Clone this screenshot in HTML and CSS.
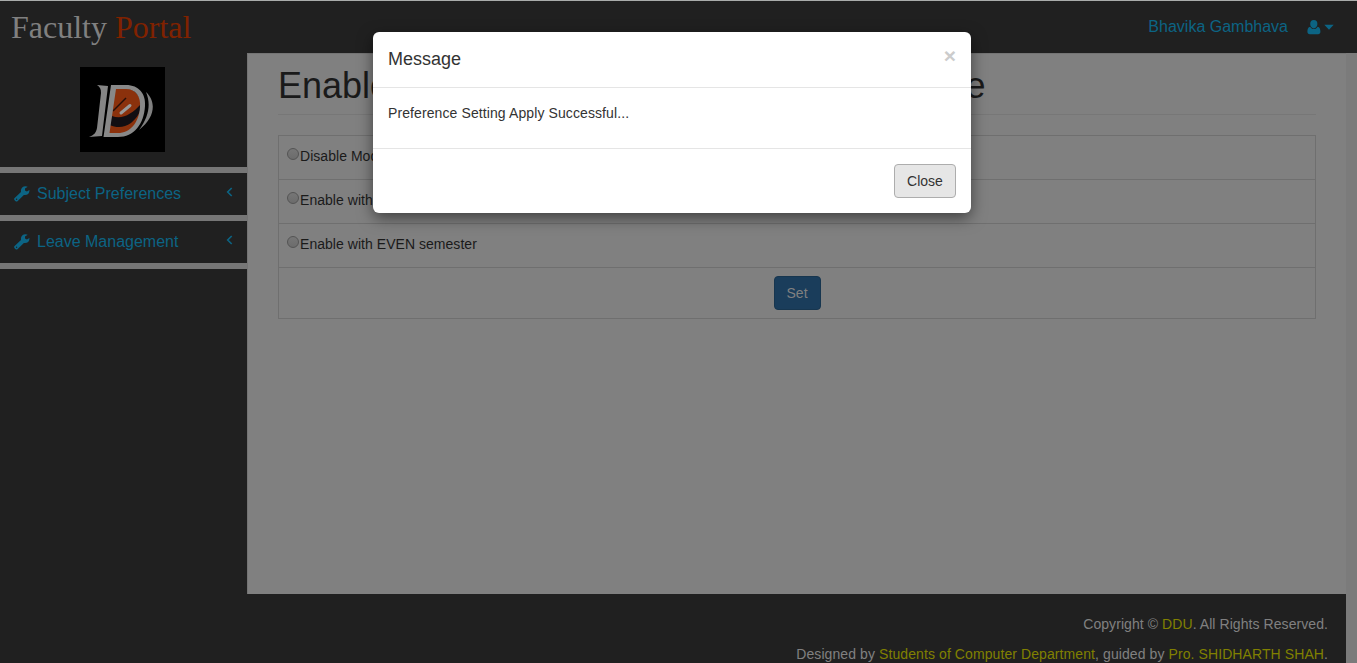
FILE: index.html
```html
<!DOCTYPE html>
<html lang="en">
<head>
<meta charset="utf-8">
<title>Faculty Portal</title>
<link rel="stylesheet" href="styles.css">
</head>
<body>
<div class="page">
  <div class="main">
    <header class="topbar">
      <div class="brand">Faculty <span class="accent">Portal</span></div>
      <div class="user">
        <span>Bhavika Gambhava</span>
        <svg class="user-icon" width="27" height="15" viewBox="0 0 27 15"><path d="M3.200 4.100a3.600 4 0 0 1 7.200 0c0 2.400-1.600 4.400-3.600 4.400S3.200 6.500 3.200 4.100ZM3.200 6.800C1 7.200.4 9.400.4 11.800c0 1.500.9 2.400 2.300 2.400h8.400c1.400 0 2.300-.9 2.300-2.400 0-2.400-.6-4.600-2.800-5C9.700 8.300 8.500 9.100 6.900 9.100S4.100 8.300 3.200 6.800ZM17.300 4.700h9.400L22 9.700Z"/></svg>
      </div>
    </header>
    <div class="columns">
      <nav class="sidebar">
        <div class="logo-box">
          <svg class="logo" width="85" height="85" viewBox="0 0 85 85">
            <rect width="85" height="85" fill="#000"/>
            <g class="logo-art">
              <path d="M34 21H46C56 22 62 31 61 41C59 56 50 67 39 68H28Z" fill="#8b310c"/>
              <path d="M32 49C42 53 52 47 61 37C61 45 57 51 51 56C44 61 37 61 29 58Z" fill="#120e12"/>
              <path d="M33 44L46 31" stroke="#250e08" stroke-width="1.400"/>
              <path d="M41 46L50 38.500" stroke="#999" stroke-width="3" stroke-linecap="round"/>
              <path d="M17 18L28 19L22 69L9 70C14 68 16 66 17 61L21 26C21 22 20 20 17 18Z" fill="#858585"/>
              <path fill-rule="evenodd" d="M31 18H46C59 18 66 27 65 39C64 57 54 70 38 70H23.500ZM36 22L29.500 66H38C50 66 59 56 60 40C61 30 56 22 46 22Z" fill="#888"/>
              <path d="M66 25C76 34 76 50 59 63C69 50 71 37 66 25Z" fill="#808080"/>
            </g>
          </svg>
        </div>
        <div class="item"><svg class="wrench" width="16" height="16" viewBox="0 0 16 16"><path fill-rule="evenodd" d="M.6 11.900L7 5.900C6.400 2.800 8.500.2 11.500.2c.8 0 1.600.2 2.200.5L11 2.500v2l1.900 1 2.500-1.500c.4 3.300-2.200 5.600-5.500 5L3.700 15c-.7.7-1.600.7-2.300 0l-.8-.8c-.7-.7-.7-1.600 0-2.300ZM2.600 12.500a.7.7 0 1 0 0 1.400.7.700 0 0 0 0-1.400Z"/></svg><span>Subject Preferences</span><svg class="chev" width="7" height="10" viewBox="0 0 7 10"><path d="M5.700 1L1.700 5l4 4"/></svg></div>
        <div class="item"><svg class="wrench" width="16" height="16" viewBox="0 0 16 16"><path fill-rule="evenodd" d="M.6 11.900L7 5.900C6.400 2.800 8.500.2 11.500.2c.8 0 1.600.2 2.200.5L11 2.500v2l1.900 1 2.500-1.500c.4 3.300-2.200 5.600-5.500 5L3.700 15c-.7.7-1.600.7-2.300 0l-.8-.8c-.7-.7-.7-1.600 0-2.300ZM2.600 12.500a.7.7 0 1 0 0 1.400.7.700 0 0 0 0-1.400Z"/></svg><span>Leave Management</span><svg class="chev" width="7" height="10" viewBox="0 0 7 10"><path d="M5.700 1L1.700 5l4 4"/></svg></div>
      </nav>
      <main class="content">
        <h1 class="title">Enable/Disable Subject Preferences Module</h1>
        <div class="table">
          <div class="row"><span class="radio"></span>Disable Module</div>
          <div class="row"><span class="radio"></span>Enable with ODD semester</div>
          <div class="row"><span class="radio"></span>Enable with EVEN semester</div>
          <div class="row action"><span class="set">Set</span></div>
        </div>
      </main>
    </div>
    <footer class="footer">
      <div class="copyright">Copyright © <span class="link">DDU</span>. All Rights Reserved.</div>
      <div class="credits">Designed by <span class="link">Students of Computer Department</span>, guided by <span class="link">Pro. SHIDHARTH SHAH</span>.</div>
    </footer>
  </div>
</div>
<div class="modal">
  <div class="modal-head"><span>Message</span><span class="x">×</span></div>
  <div class="modal-body">Preference Setting Apply Successful...</div>
  <div class="modal-foot"><span class="close">Close</span></div>
</div>
</body>
</html>
```
FILE: styles.css
```css
* { box-sizing: border-box; }
body {
  margin: 0;
  height: 663px;
  overflow: hidden;
  position: relative;
  font: 14px/20px "Liberation Sans", Arial, sans-serif;
  color: #1a1a1a;
  background: #7b7b7b;
}
.page { height: 663px; border-top: 1px solid #a9acab; }
.main { height: 662px; display: flex; flex-direction: column; }
.topbar {
  height: 52px;
  flex: none;
  display: flex;
  justify-content: space-between;
  padding: 0 23px 0 11px;
  background: #202020;
}
.brand {
  font: 32px/52px "Liberation Serif", "Times New Roman", serif;
  color: #808080;
}
.accent { color: #802200; }
.user {
  display: flex;
  align-items: center;
  gap: 19px;
  font-size: 16px;
  color: #0c6484;
}
.user-icon { fill: #0c6484; }
.columns { height: 541px; flex: none; display: flex; }
.sidebar { width: 247px; background: #202020; }
.logo-box {
  height: 120px;
  padding-top: 14px;
  padding-left: 80px;
  border-bottom: 6px solid #767676;
}
.logo { display: block; }
.logo-art { filter: blur(.4px); }
.item {
  height: 48px;
  display: flex;
  align-items: center;
  gap: 7px;
  padding: 0 14px;
  border-bottom: 6px solid #767676;
  font-size: 16px;
  color: #0c6484;
}
.wrench { fill: #0c6484; margin-bottom: 1px; }
.chev {
  margin-left: auto;
  margin-bottom: 5px;
  fill: none;
  stroke: #0c6484;
  stroke-width: 1.6;
}
.content {
  width: 1099px;
  padding: 0 30px;
  border-left: 1px solid #747474;
  border-top: 1px solid #747474;
  background: #808080;
}
.title {
  height: 61px;
  margin: 0 0 20px;
  padding-top: 12px;
  border-bottom: 1px solid #777;
  font-size: 36px;
  line-height: 40px;
  font-weight: 400;
  white-space: nowrap;
  word-spacing: 1px;
}
.table { border: 1px solid #6f6f6f; }
.row {
  height: 44px;
  display: flex;
  padding: 10px 8px;
  border-bottom: 1px solid #6f6f6f;
  letter-spacing: .04px;
}
.action {
  height: 50px;
  justify-content: center;
  padding: 8px;
  border-bottom: 0;
}
.radio {
  width: 12px;
  height: 12px;
  margin: 2px 1px 0 0;
  border: 1px solid #545454;
  border-radius: 50%;
  background: linear-gradient(#767676, #6c6c6c);
}
.set {
  width: 47px;
  height: 34px;
  border: 1px solid #17364f;
  border-radius: 4px;
  background: #1a3d5b;
  color: #808080;
  line-height: 32px;
  text-align: center;
}
.footer {
  flex: 1;
  width: 1346px;
  padding: 15px 18px 0 0;
  background: #202020;
  color: #808080;
  line-height: 30px;
  text-align: right;
}
.copyright { letter-spacing: .07px; }
.credits { letter-spacing: .09px; }
.link { color: #808000; }
.modal {
  position: absolute;
  left: 373px;
  top: 32px;
  width: 598px;
  height: 181px;
  border-radius: 6px;
  background: #fff;
  color: #333;
  box-shadow: 0 5px 15px rgba(0, 0, 0, .5);
}
.modal-head {
  height: 56px;
  display: flex;
  justify-content: space-between;
  padding: 14px 15px;
  border-bottom: 1px solid #e5e5e5;
  font-size: 18px;
  line-height: 26px;
}
.x { font-size: 21px; line-height: 19px; font-weight: 700; color: #ccc; }
.modal-body { height: 60px; padding: 15px; letter-spacing: .1px; }
.modal-foot {
  height: 65px;
  display: flex;
  justify-content: flex-end;
  padding: 15px;
  border-top: 1px solid #e5e5e5;
}
.close {
  width: 62px;
  height: 34px;
  border: 1px solid #adadad;
  border-radius: 4px;
  background: #e6e6e6;
  line-height: 32px;
  text-align: center;
}
```
